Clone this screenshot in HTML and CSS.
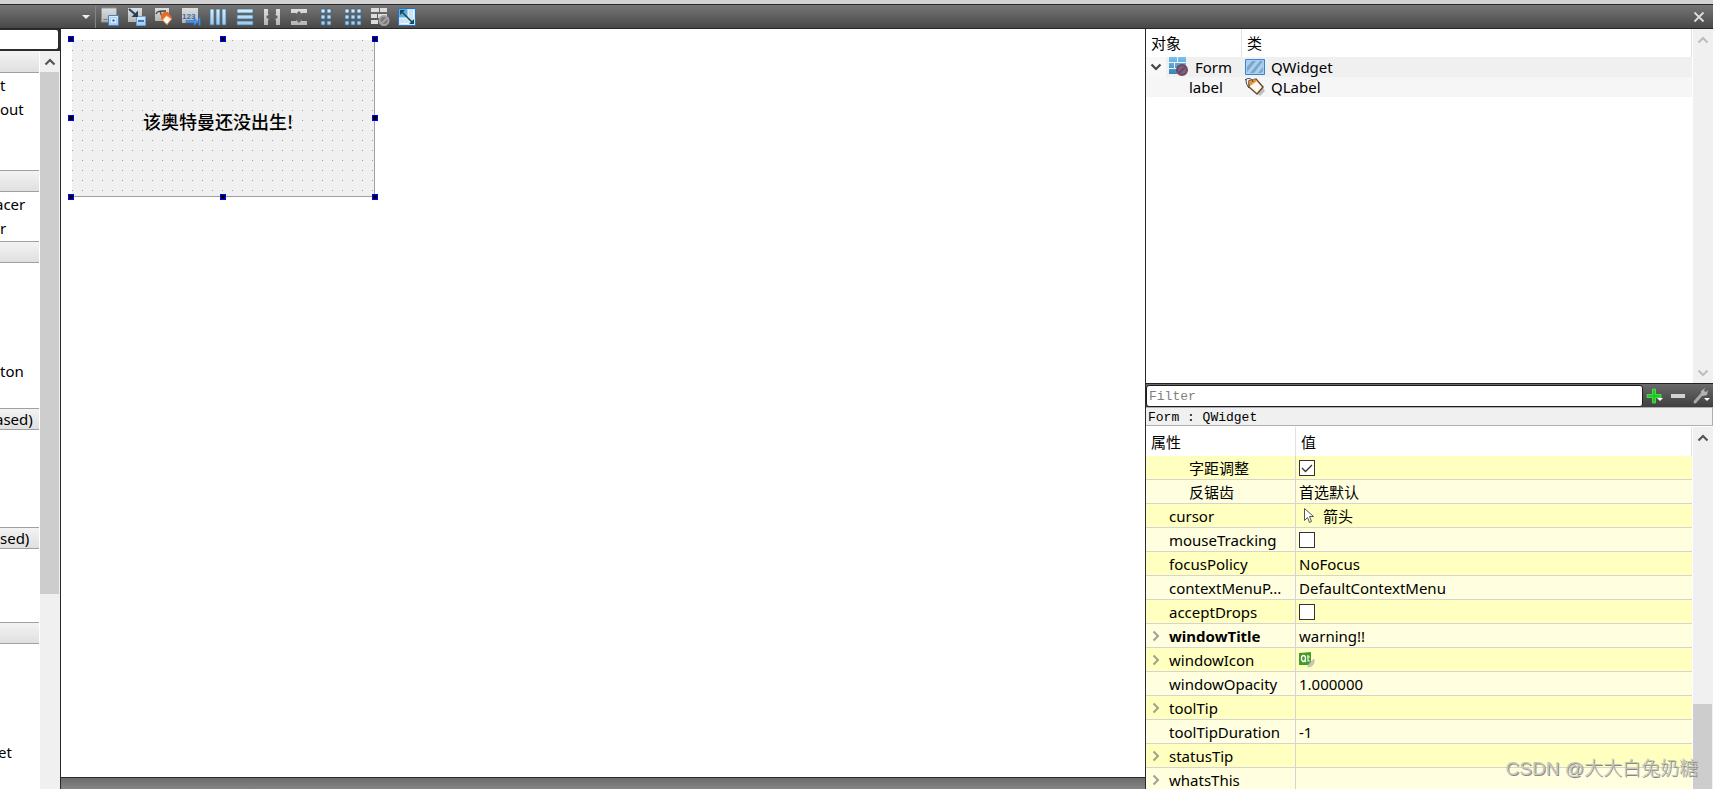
FILE: index.html
```html
<!DOCTYPE html>
<html lang="zh-CN">
<head>
<meta charset="utf-8">
<title>Form</title>
<link rel="stylesheet" href="styles.css">
</head>
<body>
<svg class="defs" aria-hidden="true">
  <defs>
    <linearGradient id="silver" x1="0" y1="0" x2="0" y2="1"><stop offset="0" stop-color="#dedede"/><stop offset="1" stop-color="#b4b4b4"/></linearGradient>
    <linearGradient id="sky" x1="0" y1="0" x2="0" y2="1"><stop offset="0" stop-color="#d8eefc"/><stop offset="1" stop-color="#96c9f2"/></linearGradient>
    <linearGradient id="blue" x1="0" y1="0" x2="0" y2="1"><stop offset="0" stop-color="#7cc3ee"/><stop offset="1" stop-color="#3583b8"/></linearGradient>
    <symbol id="up" viewBox="0 0 12 8"><path d="M1.5 6.5 6 2l4.500 4.500" fill="none" stroke="currentColor" stroke-width="2.200"/></symbol>
    <symbol id="right" viewBox="0 0 8 12"><path d="M1.500 1.500 6 6l-4.500 4.500" fill="none" stroke="currentColor" stroke-width="2"/></symbol>
  </defs>
</svg>
<header class="toolbar">
  <button class="drop" aria-label="窗体列表"><svg width="10" height="6" viewBox="0 0 10 6"><path d="M1 1h8L5 5z" fill="#eee"/></svg></button>
  <span class="sep"></span>
  <button class="tool" aria-label="编辑控件"><svg viewBox="0 0 20 20"><path d="M1.500 1h15v14h-15z" fill="url(#silver)" stroke="#8d9399"/><path d="M3.500 12.500h4" stroke="#777"/><path d="M8.500 8.500h10v10h-10z" fill="url(#sky)" stroke="#4d7fc4"/><path d="M10.500 10.500h6v6h-6z" fill="#d9edfb" stroke="#a9cdf0"/><path d="M12.500 12.500h2v2h-2z" fill="#1d4f96"/></svg></button>
  <button class="tool" aria-label="编辑信号/槽"><svg viewBox="0 0 20 20"><path d="M1 1h14v14H1z" fill="url(#silver)"/><path d="M9.500 9.500h9v9h-9z" fill="url(#sky)" stroke="#6f9fd8"/><path d="M11 14h6" stroke="#4474b4" stroke-width="2"/><path d="m2 2 8 7" stroke="#263f58" stroke-width="2"/><path d="M11 3.500V10H4.500z" fill="#263f58"/></svg></button>
  <button class="tool" aria-label="编辑伙伴"><svg viewBox="0 0 20 20"><path d="M1 1h14v13H1z" fill="url(#silver)"/><path d="M2 7c1-3 4-3 10-3M6 4l2 6" fill="none" stroke="#444" stroke-width="1.300"/><path d="m7 8 3-3h4l4 6-5 7-6-6z" fill="#e86b22"/><path d="m12.500 8.500 5 3.500-4.500 5.500-4.500-4.500z" fill="#fffaf4" stroke="#ee8b4b"/></svg></button>
  <button class="tool" aria-label="编辑 Tab 顺序"><svg viewBox="0 0 20 20"><path d="M1 1h16v15H1z" fill="url(#silver)"/><text x="1" y="12" class="digits">123</text><path d="M5 13.500h8v-3l4 4.500-4 4v-3H5zM17.500 10.500h2v8h-2z" fill="#4a92e4" stroke="#2b66b2" stroke-width=".5"/></svg></button>
  <button class="tool" aria-label="水平布局"><svg viewBox="0 0 20 20"><path d="M2 2h4v16H2zM8 2h4v16H8zM14 2h4v16h-4z" fill="url(#sky)" stroke="#49718d" stroke-width=".8"/></svg></button>
  <button class="tool" aria-label="垂直布局"><svg viewBox="0 0 20 20"><path d="M2 2h16v4H2zM2 8h16v4H2zM2 14h16v4H2z" fill="url(#sky)" stroke="#49718d" stroke-width=".8"/></svg></button>
  <button class="tool" aria-label="水平分裂器布局"><svg viewBox="0 0 20 20"><path d="M2 2h4v16H2zM14 2h4v16h-4zM6 7h2v6H6zM12 7h2v6h-2z" fill="url(#silver)"/><path d="m4 10 4-4v3h4V6l4 4-4 4v-3H8v3z" fill="#636363"/></svg></button>
  <button class="tool" aria-label="垂直分裂器布局"><svg viewBox="0 0 20 20"><path d="M2 2h16v4H2zM2 14h16v4H2zM7 6h6v2H7zM7 12h6v2H7z" fill="url(#silver)"/><path d="m10 4 4 4h-3v4h3l-4 4-4-4h3V8H6z" fill="#636363"/></svg></button>
  <button class="tool" aria-label="窗体布局"><svg viewBox="0 0 20 20"><path d="M5 2h4v4H5zM11 2h4v4h-4zM5 8h4v4H5zM11 8h4v4h-4zM5 14h4v4H5zM11 14h4v4h-4z" fill="url(#sky)" stroke="#3d678a" stroke-width=".8"/></svg></button>
  <button class="tool" aria-label="栅格布局"><svg viewBox="0 0 20 20"><path d="M2 2h4v4H2zM8 2h4v4H8zM14 2h4v4h-4zM2 8h4v4H2zM8 8h4v4H8zM14 8h4v4h-4zM2 14h4v4H2zM8 14h4v4H8zM14 14h4v4h-4z" fill="url(#sky)" stroke="#3d678a" stroke-width=".8"/></svg></button>
  <button class="tool" aria-label="打破布局"><svg viewBox="0 0 20 20"><path d="M1 1h8v4H1zM10 1h7v4h-7zM1 7h6v4H1zM8 7h9v4H8zM1 13h7v4H1z" fill="#dcdcdc"/><circle cx="14" cy="13.500" r="4.500" fill="#777" stroke="#a2a2a2" stroke-width="2"/><path d="m11 17 6-6" stroke="#a2a2a2" stroke-width="2"/></svg></button>
  <button class="tool" aria-label="调整大小"><svg viewBox="0 0 20 20"><path d="M1.500 1.500h17v17h-17z" fill="#c9e5f5" stroke="#2f70bb"/><path d="M2 2h9v9H2z" fill="#64acd9"/><path d="M11 2v9H2M3.500 16.500h13v-13" fill="none" stroke="#eef8fd"/><path d="m5 5 10 10" stroke="#164a58" stroke-width="1.500"/><path d="M3 3h5L3 8zM17 17h-5l5-5z" fill="#164a58"/></svg></button>
  <button class="close" aria-label="关闭"><svg width="12" height="12" viewBox="0 0 12 12"><path d="m1.500 1.500 9 9M10.500 1.500l-9 9" stroke="#ddd" stroke-width="1.800"/></svg></button>
</header>
<main class="workspace">
  <aside class="widgets">
    <div class="search"><input type="text" aria-label="过滤控件"></div>
    <div class="widget-body">
      <div class="widget-list">
        <h3></h3>
        <ul><li>t</li><li>out</li><li></li><li></li></ul>
        <h3></h3>
        <ul><li class="cut">acer</li><li>r</li></ul>
        <h3></h3>
        <ul><li></li><li></li><li></li><li></li><li>ton</li><li></li></ul>
        <h3 class="cut">ased)</h3>
        <ul><li></li><li></li><li></li><li></li></ul>
        <h3>sed)</h3>
        <ul><li></li><li></li><li></li></ul>
        <h3></h3>
        <ul><li></li><li></li><li></li><li></li><li class="near">et</li><li></li></ul>
      </div>
      <div class="scrollbar"><button class="arrow" aria-label="向上"><svg width="12" height="8"><use href="#up"/></svg></button><span class="thumb tall"></span></div>
    </div>
  </aside>
  <section class="canvas">
    <div class="stage">
      <div class="selection">
        <div class="form"><span class="form-label">该奥特曼还没出生!</span></div>
        <i class="h nw"></i><i class="h n"></i><i class="h ne"></i><i class="h w"></i><i class="h e"></i><i class="h sw"></i><i class="h s"></i><i class="h se"></i>
      </div>
    </div>
    <footer class="hbar"></footer>
  </section>
  <aside class="inspector">
    <section class="objects">
      <table class="tree">
        <colgroup><col class="col-object"><col></colgroup>
        <thead><tr><th>对象</th><th>类</th></tr></thead>
        <tbody>
          <tr class="root"><td><div class="cell"><button class="expand open" aria-label="折叠"><svg class="down" width="12" height="8"><use href="#up"/></svg></button><svg class="form-icon" width="20" height="20" viewBox="0 0 20 20"><path d="M1 0h8v5H1zM10 0h8v5h-8zM1 6h5v5H1zM7 6h11v5H7zM1 12h8v5H1z" fill="url(#blue)"/><circle cx="14" cy="13" r="5" fill="#65698f" stroke="#7a4257" stroke-width="2"/><path d="m11 16 6-6" stroke="#7a4257" stroke-width="2"/></svg><span>Form</span></div></td>
          <td><div class="cell"><svg class="class-icon" width="20" height="20" viewBox="0 0 20 20"><path d="M.5 2.500h19v15H.5z" fill="#a9d0f0" stroke="#3b85cc"/><path d="m2 10 5-6h4L2 15zM5 16 15 4h3L9 16zM13 16l5-6v4l-2 2z" fill="#7da6c6"/></svg><span>QWidget</span></div></td></tr>
          <tr class="leaf"><td><div class="cell child"><span>label</span></div></td>
          <td><div class="cell"><svg class="class-icon" width="20" height="20" viewBox="0 0 20 20"><path d="m7 7 1 6 7 6 5-5-5-8z" fill="#999" opacity=".6"/><path d="m4 4 7-2 7 8-6 7-8-7z" fill="#fff8ec" stroke="#6b4a30" stroke-width="1.500"/><path d="m4 4 6-2 2 2-7 5z" fill="#e79639"/><path d="M0 3c3-3 8-1 8 2M1 2c0 4 1 7 3 9" fill="none" stroke="#444"/></svg><span>QLabel</span></div></td></tr>
        </tbody>
      </table>
      <div class="scrollbar idle"><button class="arrow" aria-label="向上"><svg width="12" height="8"><use href="#up"/></svg></button><button class="arrow" aria-label="向下"><svg class="down" width="12" height="8"><use href="#up"/></svg></button></div>
    </section>
    <div class="filterbar">
      <input type="text" placeholder="Filter" aria-label="Filter">
      <button class="action" aria-label="添加"><svg width="18" height="18" viewBox="0 0 18 18"><path d="M6.500 2h3v5.500H15v3H9.500V16h-3v-5.500H1v-3h5.500z" fill="#18cc20" stroke="#58e453" stroke-width=".8"/><path d="M11 11h6l-3 3z" fill="#fff"/></svg></button>
      <button class="action" aria-label="删除"><svg width="18" height="18" viewBox="0 0 18 18"><path d="M2 7h14v4H2z" fill="#d2d2d2"/></svg></button>
      <button class="action" aria-label="配置"><svg width="18" height="18" viewBox="0 0 18 18"><path d="m3 15 7-8" stroke="#aaa" stroke-width="3" stroke-linecap="round"/><path d="M9 8V4l4-3-1 3 2 1 2-2-1 5-4 1z" fill="#b4b4b4"/><path d="M12 11h6l-3 3z" fill="#fff"/></svg></button>
    </div>
    <div class="object-name">Form : QWidget</div>
    <section class="properties">
      <table class="props">
        <colgroup><col class="col-prop"><col></colgroup>
        <thead><tr><th>属性</th><th>值</th></tr></thead>
        <tbody>
          <tr><td class="sub"><label for="kern">字距调整</label></td><td><input id="kern" type="checkbox" checked></td></tr>
          <tr><td class="sub">反锯齿</td><td>首选默认</td></tr>
          <tr><td>cursor</td><td><div class="cell"><svg class="pointer" width="18" height="18" viewBox="0 0 18 18"><path d="M5.500 1.500v12l3-3 2 5 2-1-2-5h4z" fill="#fff" stroke="#555"/></svg><span>箭头</span></div></td></tr>
          <tr><td><label for="track">mouseTracking</label></td><td><input id="track" type="checkbox"></td></tr>
          <tr><td>focusPolicy</td><td>NoFocus</td></tr>
          <tr><td>contextMenuP...</td><td>DefaultContextMenu</td></tr>
          <tr><td><label for="drops">acceptDrops</label></td><td><input id="drops" type="checkbox"></td></tr>
          <tr><td class="parent"><div class="cell"><button class="expand" aria-label="展开"><svg width="8" height="12"><use href="#right"/></svg></button><b>windowTitle</b></div></td><td>warning!!</td></tr>
          <tr><td class="parent"><div class="cell"><button class="expand" aria-label="展开"><svg width="8" height="12"><use href="#right"/></svg></button><span>windowIcon</span></div></td><td><svg class="qt" width="16" height="16" viewBox="0 0 16 16"><path d="M0 1 12 0v13H0z" fill="#459b2b"/><ellipse cx="4.500" cy="6.500" rx="2" ry="3" fill="none" stroke="#fff" stroke-width="1.300"/><path d="m5 8 2 2M9 3v6h2M8 5h3" fill="none" stroke="#e5f5df" stroke-width="1.200"/><path d="M15 7c1 5-2 8-6 8 0-3 3-5 6-8z" fill="#c7c7c0" stroke="#aaa" stroke-width=".5"/></svg></td></tr>
          <tr><td>windowOpacity</td><td>1.000000</td></tr>
          <tr><td class="parent"><div class="cell"><button class="expand" aria-label="展开"><svg width="8" height="12"><use href="#right"/></svg></button><span>toolTip</span></div></td><td></td></tr>
          <tr><td>toolTipDuration</td><td>-1</td></tr>
          <tr><td class="parent"><div class="cell"><button class="expand" aria-label="展开"><svg width="8" height="12"><use href="#right"/></svg></button><span>statusTip</span></div></td><td></td></tr>
          <tr><td class="parent"><div class="cell"><button class="expand" aria-label="展开"><svg width="8" height="12"><use href="#right"/></svg></button><span>whatsThis</span></div></td><td></td></tr>
        </tbody>
      </table>
      <div class="scrollbar"><button class="arrow" aria-label="向上"><svg width="12" height="8"><use href="#up"/></svg></button><span class="thumb low"></span></div>
    </section>
  </aside>
</main>
<div class="watermark">CSDN @大大白兔奶糖</div>
</body>
</html>
```
FILE: styles.css
```css
* { box-sizing: border-box; }

body {
  margin: 0;
  height: 100vh;
  overflow: hidden;
  display: flex;
  flex-direction: column;
  position: relative;
  background: #fff;
  color: #000;
  font: 15px/20px "Noto Sans", "Noto Sans CJK SC", sans-serif;
}

button { border: 0; padding: 0; background: none; color: inherit; font: inherit; display: flex; align-items: center; justify-content: center; flex: none; }
svg { display: block; flex: none; }
.defs { position: absolute; width: 0; height: 0; }

/* Toolbar */
.toolbar {
  flex: none;
  height: 29px;
  display: flex;
  align-items: center;
  padding-top: 2px;
  border-top: 4px solid #d2d2d2;
  border-bottom: 1px solid #262626;
  background: linear-gradient(#292929 0 1px, #757575 1px, #606060 50%, #484848);
}
.drop { width: 14px; height: 20px; margin-left: 79px; }
.sep { width: 1px; height: 22px; margin-left: 2px; background: #858585; }
.tool { width: 27px; height: 20px; }
.tool svg { width: 20px; height: 20px; }
.digits { font: bold 8px "Liberation Sans", sans-serif; fill: #3a6ea8; }
.close { width: 20px; height: 20px; margin-left: auto; margin-right: 4px; }

.workspace {
  flex: 1;
  min-height: 0;
  display: grid;
  grid-template-columns: 61px minmax(0, 1fr) 568px;
}

/* Widget box */
.widgets { display: flex; flex-direction: column; min-height: 0; border-right: 1px solid #292929; }
.search { flex: none; height: 22px; padding: 1px 2px 2px 0; background: #2d2d2d; }
.search input { display: block; width: 100%; height: 19px; border: 0; border-radius: 0 2px 2px 0; background: #fff; outline: 0; }
.widget-body { flex: 1; min-height: 0; display: flex; }
.widget-list { width: 39px; margin-right: 1px; overflow: hidden; }
.widget-list h3 {
  height: 22px;
  margin: 0;
  border-top: 1px solid #a0a0a0;
  border-bottom: 1px solid #a0a0a0;
  background: linear-gradient(#f3f3f3, #e0e0e0);
  font-size: 15px;
  font-weight: 400;
  line-height: 20px;
}
.widget-list h3:first-child { border-top-color: #f3f3f3; }
.widget-list ul { margin: 0 0 1px; padding: 0; list-style: none; }
.widget-list li { height: 24px; line-height: 24px; }
.widget-list .cut { text-indent: -5px; }
.widget-list .near { text-indent: -2px; }

.scrollbar { flex: none; width: 20px; display: flex; flex-direction: column; background: #f0f0f0; color: #555; }
.arrow { width: 19px; height: 21px; }
.down { transform: rotate(180deg); }
.thumb { width: 19px; background: #cdcdcd; }
.tall { height: 522px; }
.low { flex: none; height: 85px; margin-top: auto; }

/* Form editor */
.canvas { display: flex; flex-direction: column; min-width: 0; }
.stage { flex: 1; padding: 7px; background: #fff; }
.hbar { height: 12px; border-top: 1px solid #292929; background: linear-gradient(#6c6c6c, #858585); }
.selection { position: relative; width: 310px; height: 164px; padding: 4px 3px 3px 4px; }
.form {
  height: 157px;
  display: flex;
  align-items: center;
  padding: 6px 0 0 71px;
  border-right: 1px solid #a0a0a0;
  border-bottom: 1px solid #a0a0a0;
  background: conic-gradient(from 270deg at 1px 1px, #a0a0a0 90deg, #f0f0f0 0) 0 0 / 10px 10px;
}
.form-label { font: 500 18px/20px "Noto Sans CJK SC", sans-serif; white-space: nowrap; }
.h { position: absolute; width: 6px; height: 6px; border: 1px solid #00f; background: #000; }
.nw, .n, .ne { top: 0; }
.w, .e { top: 79px; }
.sw, .s, .se { bottom: 0; }
.nw, .w, .sw { left: 0; }
.n, .s { left: 152px; }
.ne, .e, .se { right: 0; }

/* Object inspector */
.inspector { display: flex; flex-direction: column; min-height: 0; border-left: 1px solid #292929; }
.objects { flex: none; height: 354px; display: flex; }
table { flex: 1; min-width: 0; table-layout: fixed; border-collapse: separate; border-spacing: 0; align-self: flex-start; }
th, td { padding: 0; text-align: left; font-weight: 400; white-space: nowrap; overflow: hidden; }
.objects table, .properties table { margin-right: 1px; }
.cell { display: flex; align-items: center; }
.col-object { width: 96px; }
.tree th { height: 28px; padding-left: 5px; border-right: 1px solid #e2e2e2; }
.tree td { height: 20px; }
.root { background: #f0f0f0; }
.leaf { background: #f6f6f6; }
.tree .root td:first-child { background: linear-gradient(90deg, #f8f8f8 20px, #f0f0f0 20px); }
.form-icon { margin-right: 7px; }
.expand { width: 22px; height: 20px; color: #a0a090; }
.open { width: 20px; margin-right: 2px; color: #444; }
.class-icon { margin: 0 6px 0 3px; }
.child { padding-left: 43px; }
.idle { justify-content: space-between; color: #bdbdbd; }

.filterbar {
  flex: none;
  height: 24px;
  display: flex;
  align-items: center;
  border-top: 1px solid #222;
  background: linear-gradient(#6a6a6a, #3f3f3f);
}
.filterbar input {
  flex: 1;
  min-width: 0;
  height: 22px;
  margin: 0 3px 0 0;
  padding: 2px 2px 0;
  border: 1px solid #1c1c1c;
  border-radius: 3px;
  background: #fff;
  font: 13px/18px "Liberation Mono", monospace;
  outline: 0;
}
.filterbar input::placeholder { color: #808080; opacity: 1; }
.action { width: 18px; height: 20px; margin-right: 5px; }
.action:last-child { margin-right: 3px; }
.object-name {
  flex: none;
  height: 19px;
  margin-bottom: 1px;
  padding: 1px 0 0 2px;
  border: 1px solid #b0b0b0;
  border-left: 0;
  background: #f0f0f0;
  font: 13px/18px "Liberation Mono", monospace;
}

/* Property editor */
.properties { flex: 1; min-height: 0; display: flex; overflow: hidden; }
.col-prop { width: 150px; }
.props th { height: 29px; padding-left: 5px; border-right: 1px solid #e2e2e2; }
.props td { height: 24px; border-bottom: 1px solid #d4d4d4; }
.props td:first-child { padding-left: 23px; border-right: 1px solid #d4d4d4; }
.props td:last-child { padding-left: 3px; }
.props .sub:first-child { padding-left: 43px; }
.props .parent:first-child { padding-left: 0; }
.parent .expand { width: 20px; margin-right: 3px; }
.props tbody tr:nth-child(odd) { background: #ffffbf; }
.props tbody tr:nth-child(even) { background: #ffffdf; }
.pointer { margin-right: 6px; }
input[type="checkbox"] { appearance: none; display: block; width: 16px; height: 16px; margin: 0; border: 1px solid #333; background: #fff; }
input[type="checkbox"]:checked {
  background: #fff url("data:image/svg+xml,%3Csvg xmlns='http://www.w3.org/2000/svg' viewBox='0 0 14 14'%3E%3Cpath d='m2 7 3.500 3.500L12 4' fill='none' stroke='%23333' stroke-width='1.300'/%3E%3C/svg%3E");
}

.watermark {
  position: absolute;
  right: 15px;
  bottom: 6px;
  color: #c6c6be;
  font: 300 19px/28px "Liberation Sans", "Noto Sans CJK SC", sans-serif;
  text-shadow: 1px 1px 0 #8a8a84;
}
```
